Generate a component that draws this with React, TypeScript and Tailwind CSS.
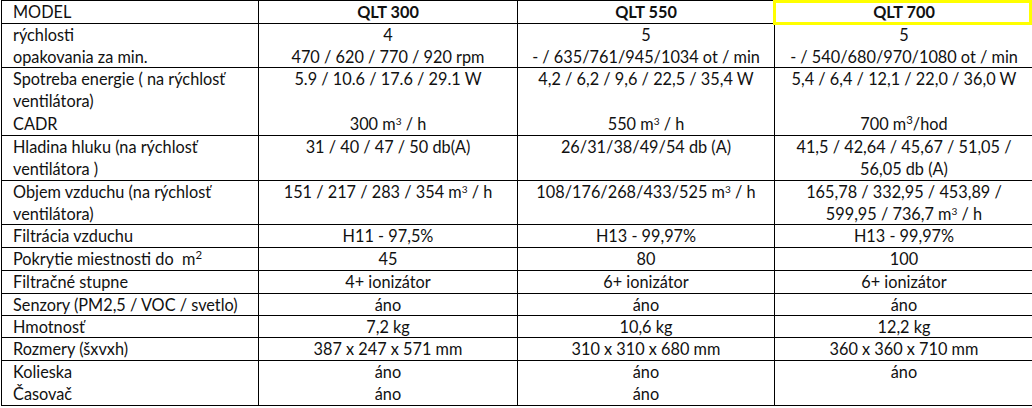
import type { ReactNode } from 'react';

type Row = {
  h: string;
  cells: ReactNode[][];
};

const M3 = (
  <>
    m<sup className="text-[0.62em]">3</sup>
  </>
);

const rows: Row[] = [
  {
    h: 'h-[44px]',
    cells: [
      ['rýchlosti', 'opakovania za min.'],
      ['4', '470 / 620 / 770 / 920 rpm'],
      ['5', '- / 635/761/945/1034 ot / min'],
      ['5', '- / 540/680/970/1080 ot / min'],
    ],
  },
  {
    h: 'h-[68px]',
    cells: [
      ['Spotreba energie ( na rýchlosť', 'ventilátora)', 'CADR'],
      ['5.9 / 10.6 / 17.6 / 29.1 W', '', <>300 {M3} / h</>],
      ['4,2 / 6,2 / 9,6 / 22,5 / 35,4 W', '', <>550 {M3} / h</>],
      [
        '5,4 / 6,4 / 12,1 / 22,0 / 36,0 W',
        '',
        <>
          700 m<sup className="text-[0.7em]">3</sup>/hod
        </>,
      ],
    ],
  },
  {
    h: 'h-[45px]',
    cells: [
      ['Hladina hluku (na rýchlosť', 'ventilátora )'],
      ['31 / 40 / 47 / 50 db(A)'],
      ['26/31/38/49/54 db (A)'],
      ['41,5 / 42,64 / 45,67 / 51,05 /', '56,05 db (A)'],
    ],
  },
  {
    h: 'h-[44px]',
    cells: [
      ['Objem vzduchu (na rýchlosť', 'ventilátora)'],
      [<>151 / 217 / 283 / 354 {M3} / h</>],
      [<>108/176/268/433/525 {M3} / h</>],
      ['165,78 / 332,95 / 453,89 /', <>599,95 / 736,7 {M3} / h</>],
    ],
  },
  {
    h: 'h-[23px]',
    cells: [['Filtrácia vzduchu'], ['H11 - 97,5%'], ['H13 - 99,97%'], ['H13 - 99,97%']],
  },
  {
    h: 'h-[23px]',
    cells: [
      [
        <>
          Pokrytie miestnosti do&nbsp; m<sup className="text-[0.7em]">2</sup>
        </>,
      ],
      ['45'],
      ['80'],
      ['100'],
    ],
  },
  {
    h: 'h-[23px]',
    cells: [['Filtračné stupne'], ['4+ ionizátor'], ['6+ ionizátor'], ['6+ ionizátor']],
  },
  {
    h: 'h-[22px]',
    cells: [['Senzory (PM2,5 / VOC / svetlo)'], ['áno'], ['áno'], ['áno']],
  },
  {
    h: 'h-[22px]',
    cells: [['Hmotnosť'], ['7,2 kg'], ['10,6 kg'], ['12,2 kg']],
  },
  {
    h: 'h-[23px]',
    cells: [
      ['Rozmery (šxvxh)'],
      ['387 x 247 x 571 mm'],
      ['310 x 310 x 680 mm'],
      ['360 x 360 x 710 mm'],
    ],
  },
  {
    h: 'h-[45px]',
    cells: [
      ['Kolieska', 'Časovač'],
      ['áno', 'áno'],
      ['áno', 'áno'],
      ['áno'],
    ],
  },
];

const cols = 'grid grid-cols-[257px_259px_257px_258px]';

function Cell({ lines, first }: { lines: ReactNode[]; first?: boolean }) {
  return (
    <div
      className={
        first
          ? 'border-r border-black pl-[11px] text-left'
          : 'border-r border-black text-center last:border-r-0'
      }
    >
      {lines.map((l, i) => (
        <div key={i} className="h-[22.4px] whitespace-nowrap">
          {l}
        </div>
      ))}
    </div>
  );
}

export default function App() {
  return (
    <div className="h-[408px] w-[1032px] bg-white pl-px font-['Lato',sans-serif] text-[16.3px] leading-[22px] text-[#111]">
      <div className="border-t border-l border-black">
        <div className={`${cols} h-[23px] border-b border-black`}>
          <div className="border-r border-black pl-[11px]">MODEL</div>
          <div className="border-r border-black text-center font-bold">QLT 300</div>
          <div className="border-r border-black text-center font-bold">QLT 550</div>
          <div className="relative text-center font-bold">
            <div className="absolute -top-px -left-[2px] right-[1px] -bottom-[2px] border-[3px] border-[#ffff00]" />
            <span className="relative">QLT 700</span>
          </div>
        </div>
        {rows.map((r, i) => (
          <div key={i} className={`${cols} ${r.h} border-b border-black`}>
            {r.cells.map((c, j) => (
              <Cell key={j} lines={c} first={j === 0} />
            ))}
          </div>
        ))}
      </div>
    </div>
  );
}
